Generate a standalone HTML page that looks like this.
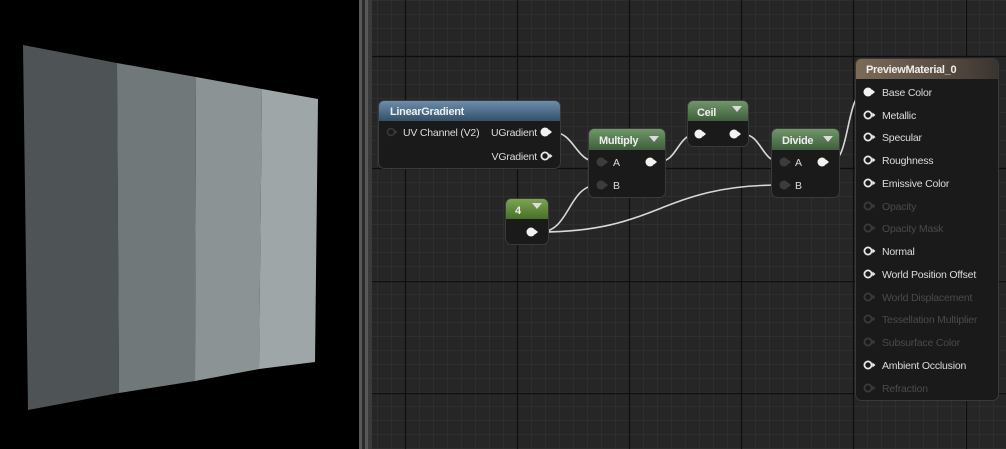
<!DOCTYPE html>
<html><head><meta charset="utf-8"><style>
html,body{margin:0;padding:0;background:#000;width:1006px;height:449px;overflow:hidden}
svg{display:block}
text{font-family:"Liberation Sans",sans-serif;font-size:10.5px;fill:#dcdcdc;letter-spacing:-0.2px}
.h{font-weight:bold;fill:#eeeeee;font-size:11px;letter-spacing:-0.3px}
.d{fill:#4a4a4a}
</style></head><body>
<svg width="1006" height="449" viewBox="0 0 1006 449" xmlns="http://www.w3.org/2000/svg">
<defs>
<pattern id="minor" x="405" y="56" width="14" height="14" patternUnits="userSpaceOnUse">
<path d="M0 0H14M0 0V14" stroke="#353535" stroke-width="1" fill="none"/>
</pattern>
<linearGradient id="blue" x1="0" y1="0" x2="0" y2="1"><stop offset="0" stop-color="#6b8eab"/><stop offset="1" stop-color="#34506a"/></linearGradient>
<linearGradient id="green" x1="0" y1="0" x2="0" y2="1"><stop offset="0" stop-color="#6f9669"/><stop offset="1" stop-color="#3f5e3c"/></linearGradient>
<linearGradient id="lgreen" x1="0" y1="0" x2="0" y2="1"><stop offset="0" stop-color="#7ba450"/><stop offset="1" stop-color="#47702a"/></linearGradient>
<linearGradient id="brown" x1="0" y1="0" x2="1" y2="0"><stop offset="0" stop-color="#7d6a58"/><stop offset="0.6" stop-color="#5a4d42"/><stop offset="1" stop-color="#3a342f"/></linearGradient>
</defs>
<rect x="0" y="0" width="360" height="449" fill="#000"/>
<polygon points="23,45 117,63 119,393 28,410" fill="#4e5356"/>
<polygon points="117,63 196,77 195,381 119,393" fill="#717879"/>
<polygon points="196,77 262,89 259,369 195,381" fill="#8b9395"/>
<polygon points="262,89 318,99 315,362 259,369" fill="#9ea6a8"/>
<rect x="359" y="0" width="3" height="449" fill="#585858"/>
<rect x="362" y="0" width="3" height="449" fill="#2a2a2a"/>
<rect x="365" y="0" width="3" height="449" fill="#585858"/>
<rect x="368" y="0" width="4" height="449" fill="#3a3a3a"/>
<rect x="372" y="0" width="634" height="449" fill="#262626"/>
<rect x="372" y="0" width="634" height="449" fill="url(#minor)"/>
<g stroke="#0e0e0e" stroke-width="1.2">
<path d="M405.5 0V449M517.5 0V449M629.5 0V449M741.5 0V449M853.5 0V449M966.5 0V449"/>
<path d="M372 56.5H1006M372 168.5H1006M372 281.5H1006M372 393.5H1006"/>
</g>
<g stroke="#d8d8d8" stroke-width="1.6" fill="none">
<path d="M552 132C575 132 575 162 598 162"/>
<path d="M658 162C678 162 677 134 697 134"/>
<path d="M742 134C762 134 761 162 781 162"/>
<path d="M831 162C850 162 846 92 865 92"/>
<path d="M540 232C570 232 568 185 598 185"/>
<path d="M540 232C660 232 660 185 781 185"/>
</g>
<rect x="378.5" y="100.5" width="182" height="68" rx="6" fill="#1a1a1a" stroke="#3a3a3a"/>
<path d="M379 121V106a5 5 0 0 1 5-5h171a5 5 0 0 1 5 5v15z" fill="url(#blue)"/>
<text x="390" y="115" class="h">LinearGradient</text>
<text x="403" y="136">UV Channel (V2)</text>
<text x="537" y="136" text-anchor="end">UGradient</text>
<text x="537" y="160" text-anchor="end">VGradient</text>
<rect x="588.5" y="128.5" width="77" height="69" rx="6" fill="#1a1a1a" stroke="#3a3a3a"/>
<path d="M589 150V134a5 5 0 0 1 5-5h66a5 5 0 0 1 5 5v16z" fill="url(#green)"/>
<text x="599" y="144" class="h">Multiply</text>
<path d="M649 136h10l-5 6z" fill="#dcdcdc"/>
<text x="613" y="166">A</text><text x="613" y="189">B</text>
<rect x="687.5" y="100.5" width="61" height="46" rx="6" fill="#1a1a1a" stroke="#3a3a3a"/>
<path d="M688 121V106a5 5 0 0 1 5-5h50a5 5 0 0 1 5 5v15z" fill="url(#green)"/>
<text x="697" y="116" class="h">Ceil</text>
<path d="M732 106h10l-5 6z" fill="#dcdcdc"/>
<rect x="771.5" y="128.5" width="68" height="69" rx="6" fill="#1a1a1a" stroke="#3a3a3a"/>
<path d="M772 150V134a5 5 0 0 1 5-5h57a5 5 0 0 1 5 5v16z" fill="url(#green)"/>
<text x="782" y="144" class="h">Divide</text>
<path d="M823 136h10l-5 6z" fill="#dcdcdc"/>
<text x="795" y="166">A</text><text x="795" y="189">B</text>
<rect x="505.5" y="198.5" width="43" height="46" rx="6" fill="#1a1a1a" stroke="#3a3a3a"/>
<path d="M506 219V204a5 5 0 0 1 5-5h32a5 5 0 0 1 5 5v15z" fill="url(#lgreen)"/>
<text x="515" y="214" class="h">4</text>
<path d="M532 203h10l-5 6z" fill="#dcdcdc"/>
<rect x="855.5" y="58.5" width="143" height="342" rx="6" fill="#1a1a1a" stroke="#3a3a3a"/>
<path d="M856 79V64a5 5 0 0 1 5-5h132a5 5 0 0 1 5 5v15z" fill="url(#brown)"/>
<text x="866" y="73" class="h">PreviewMaterial_0</text>
<text x="882" y="96">Base Color</text>
<text x="882" y="119">Metallic</text>
<text x="882" y="141">Specular</text>
<text x="882" y="164">Roughness</text>
<text x="882" y="187">Emissive Color</text>
<text x="882" y="210" class="d">Opacity</text>
<text x="882" y="232" class="d">Opacity Mask</text>
<text x="882" y="255">Normal</text>
<text x="882" y="278">World Position Offset</text>
<text x="882" y="301" class="d">World Displacement</text>
<text x="882" y="323" class="d">Tessellation Multiplier</text>
<text x="882" y="346" class="d">Subsurface Color</text>
<text x="882" y="369">Ambient Occlusion</text>
<text x="882" y="392" class="d">Refraction</text>
<g fill="#f2f2f2">
<circle cx="545" cy="132" r="4.5"/><path d="M549 129.5l3 2.5-3 2.5z"/>
<circle cx="650" cy="162" r="4.5"/><path d="M654 159.5l3 2.5-3 2.5z"/>
<circle cx="699" cy="134" r="4.5"/><path d="M703 131.5l3 2.5-3 2.5z"/>
<circle cx="734" cy="134" r="4.5"/><path d="M738 131.5l3 2.5-3 2.5z"/>
<circle cx="822" cy="162" r="4.5"/><path d="M826 159.5l3 2.5-3 2.5z"/>
<circle cx="531" cy="232" r="4.5"/><path d="M535 229.5l3 2.5-3 2.5z"/>
<circle cx="868" cy="92" r="4.5"/><path d="M872 89.5l3 2.5-3 2.5z"/>
</g>
<g fill="#3c3c3c">
<circle cx="601" cy="162" r="4.5"/><path d="M605 159.5l3 2.5-3 2.5z"/>
<circle cx="601" cy="185" r="4.5"/><path d="M605 182.5l3 2.5-3 2.5z"/>
<circle cx="784" cy="162" r="4.5"/><path d="M788 159.5l3 2.5-3 2.5z"/>
<circle cx="784" cy="185" r="4.5"/><path d="M788 182.5l3 2.5-3 2.5z"/>
</g>
<circle cx="391" cy="132" r="3.5" fill="none" stroke="#3a3a3a" stroke-width="1.5"/>
<path d="M395 130l2.5 2-2.5 2z" fill="#3a3a3a"/>
<g fill="none" stroke="#e8e8e8" stroke-width="1.8">
<circle cx="545" cy="156" r="3.6"/>
<circle cx="868" cy="115" r="3.6"/><circle cx="868" cy="137" r="3.6"/><circle cx="868" cy="160" r="3.6"/><circle cx="868" cy="183" r="3.6"/><circle cx="868" cy="251" r="3.6"/><circle cx="868" cy="274" r="3.6"/><circle cx="868" cy="365" r="3.6"/>
</g>
<g fill="#e8e8e8">
<path d="M549.5 153.5l3 2.5-3 2.5z"/>
<path d="M872.5 112.5l3 2.5-3 2.5z"/><path d="M872.5 134.5l3 2.5-3 2.5z"/><path d="M872.5 157.5l3 2.5-3 2.5z"/><path d="M872.5 180.5l3 2.5-3 2.5z"/><path d="M872.5 248.5l3 2.5-3 2.5z"/><path d="M872.5 271.5l3 2.5-3 2.5z"/><path d="M872.5 362.5l3 2.5-3 2.5z"/>
</g>
<g fill="none" stroke="#3a3a3a" stroke-width="1.8">
<circle cx="868" cy="206" r="3.6"/><circle cx="868" cy="228" r="3.6"/><circle cx="868" cy="297" r="3.6"/><circle cx="868" cy="319" r="3.6"/><circle cx="868" cy="342" r="3.6"/><circle cx="868" cy="388" r="3.6"/>
</g>
<g fill="#3a3a3a">
<path d="M872.5 203.5l3 2.5-3 2.5z"/><path d="M872.5 225.5l3 2.5-3 2.5z"/><path d="M872.5 294.5l3 2.5-3 2.5z"/><path d="M872.5 316.5l3 2.5-3 2.5z"/><path d="M872.5 339.5l3 2.5-3 2.5z"/><path d="M872.5 385.5l3 2.5-3 2.5z"/>
</g>
</svg>
</body></html>
